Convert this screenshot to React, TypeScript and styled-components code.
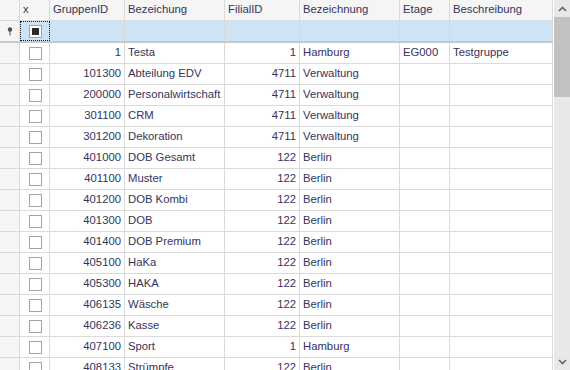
import React from "react";
import styled, { createGlobalStyle } from "styled-components";

const Global = createGlobalStyle`
  html, body { margin: 0; padding: 0; overflow: hidden; background: #ffffff; }
  body { font-family: "Liberation Sans", Arial, sans-serif; font-size: 11.3px; color: #34345c; }
`;

const COLS = "20px 30px 75px 100px 75px 100px 50px 103px";

const Frame = styled.div`
  display: flex;
  width: 570px;
  height: 370px;
  overflow: hidden;
  background: #ffffff;
`;

const Grid = styled.div`
  display: flex;
  flex-direction: column;
  width: 553px;
  border-right: 1px solid #ffffff;
`;

const Row = styled.div<{ $kind?: "header" | "filter" | "data" }>`
  display: grid;
  grid-template-columns: ${COLS};
  flex: none;
  height: 20px;
  border-bottom: ${(p) => (p.$kind === "filter" ? "2px solid #c8c8c8" : "1px solid #dadada")};
  background: ${(p) =>
    p.$kind === "header" ? "#f5f5f5" : p.$kind === "filter" ? "#cde4f7" : "#ffffff"};
`;

const Cell = styled.div<{ $align?: "left" | "right" | "center" }>`
  display: flex;
  align-items: center;
  justify-content: ${(p) =>
    p.$align === "right" ? "flex-end" : p.$align === "center" ? "center" : "flex-start"};
  padding: 0 3px 0 3px;
  border-right: 1px solid #dadada;
  white-space: nowrap;
  overflow: hidden;
  line-height: 1;
  box-sizing: border-box;
`;

const IndicatorCell = styled(Cell)`
  background: #f5f5f5;
  padding: 0;
  justify-content: center;
`;

const FocusCell = styled(Cell)`
  outline: 1px dotted #1a1a1a;
  outline-offset: -1px;
  justify-content: center;
  padding: 0;
`;

const Box = styled.div<{ $checked?: boolean }>`
  width: 11px;
  height: 11px;
  border: 1px solid #a3a3a3;
  background: #ffffff;
  display: flex;
  align-items: center;
  justify-content: center;
  margin-left: 1px;
  &::after {
    content: "";
    display: ${(p) => (p.$checked ? "block" : "none")};
    width: 7px;
    height: 7px;
    background: #2a2a2a;
  }
`;

const Scrollbar = styled.div`
  display: flex;
  flex-direction: column;
  width: 16px;
  background: #e8e8e8;
`;

const ArrowBtn = styled.div`
  height: 17px;
  display: flex;
  align-items: center;
  justify-content: center;
  flex: none;
`;

const Track = styled.div`
  flex: 1;
  display: flex;
  flex-direction: column;
`;

const Thumb = styled.div`
  height: 80px;
  background: #c2c2c2;
  flex: none;
`;

const Pin = () => (
  <svg width="6" height="9" viewBox="0 0 6 9">
    <circle cx="3" cy="2.5" r="2.2" fill="#505050" />
    <rect x="2.5" y="4" width="1" height="4.5" fill="#505050" />
  </svg>
);

const Chevron = ({ up }: { up?: boolean }) => (
  <svg width="9" height="6" viewBox="0 0 9 6">
    <path
      d={up ? "M1 5 L4.5 1.5 L8 5" : "M1 1 L4.5 4.5 L8 1"}
      fill="none"
      stroke="#666"
      strokeWidth="1.6"
    />
  </svg>
);

type R = [string, string, string, string, string, string];

const rows: R[] = [
  ["1", "Testa", "1", "Hamburg", "EG000", "Testgruppe"],
  ["101300", "Abteilung EDV", "4711", "Verwaltung", "", ""],
  ["200000", "Personalwirtschaft", "4711", "Verwaltung", "", ""],
  ["301100", "CRM", "4711", "Verwaltung", "", ""],
  ["301200", "Dekoration", "4711", "Verwaltung", "", ""],
  ["401000", "DOB Gesamt", "122", "Berlin", "", ""],
  ["401100", "Muster", "122", "Berlin", "", ""],
  ["401200", "DOB Kombi", "122", "Berlin", "", ""],
  ["401300", "DOB", "122", "Berlin", "", ""],
  ["401400", "DOB Premium", "122", "Berlin", "", ""],
  ["405100", "HaKa", "122", "Berlin", "", ""],
  ["405300", "HAKA", "122", "Berlin", "", ""],
  ["406135", "Wäsche", "122", "Berlin", "", ""],
  ["406236", "Kasse", "122", "Berlin", "", ""],
  ["407100", "Sport", "1", "Hamburg", "", ""],
  ["408133", "Strümpfe", "122", "Berlin", "", ""],
];

const headers = ["x", "GruppenID", "Bezeichung", "FilialID", "Bezeichnung", "Etage", "Beschreibung"];

export default function App() {
  return (
    <>
      <Global />
      <Frame>
        <Grid>
          <Row $kind="header">
            <IndicatorCell />
            {headers.map((h) => (
              <Cell key={h}>{h}</Cell>
            ))}
          </Row>
          <Row $kind="filter">
            <IndicatorCell>
              <Pin />
            </IndicatorCell>
            <FocusCell>
              <Box $checked />
            </FocusCell>
            <Cell />
            <Cell />
            <Cell />
            <Cell />
            <Cell />
            <Cell />
          </Row>
          {rows.map((r) => (
            <Row key={r[0]} $kind="data">
              <IndicatorCell />
              <Cell $align="center">
                <Box />
              </Cell>
              <Cell $align="right">{r[0]}</Cell>
              <Cell>{r[1]}</Cell>
              <Cell $align="right">{r[2]}</Cell>
              <Cell>{r[3]}</Cell>
              <Cell>{r[4]}</Cell>
              <Cell>{r[5]}</Cell>
            </Row>
          ))}
        </Grid>
        <Scrollbar>
          <ArrowBtn>
            <Chevron up />
          </ArrowBtn>
          <Track>
            <Thumb />
          </Track>
          <ArrowBtn>
            <Chevron />
          </ArrowBtn>
        </Scrollbar>
      </Frame>
    </>
  );
}
